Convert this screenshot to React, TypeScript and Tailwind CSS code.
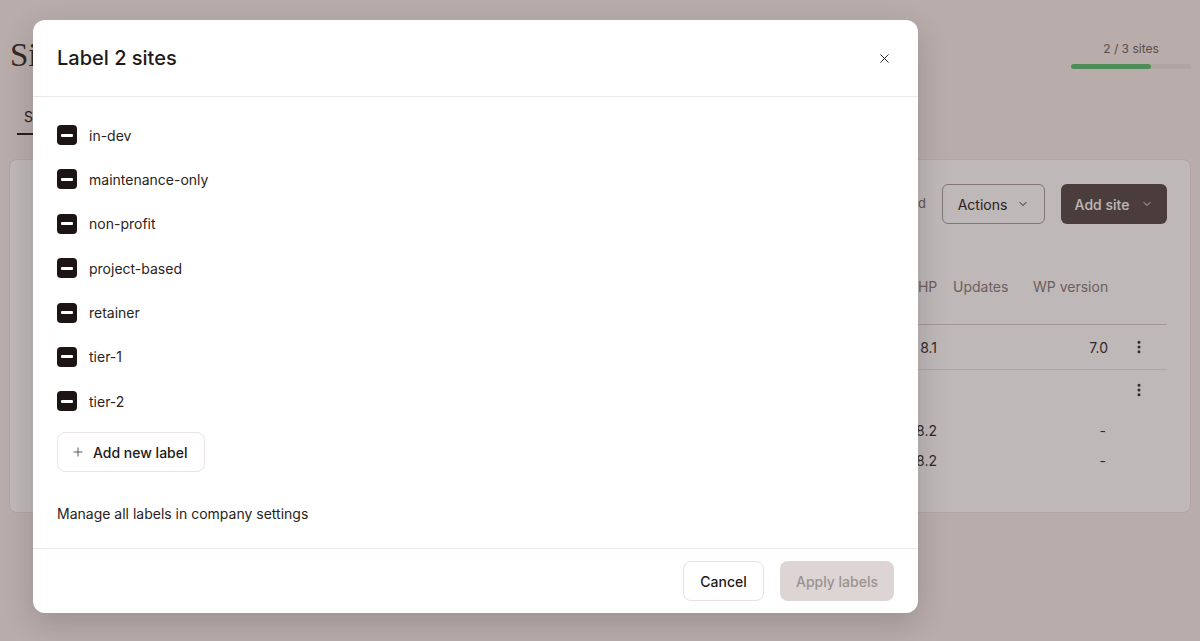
import { X, Plus, ChevronDown, EllipsisVertical } from "lucide-react"

const labels = ["in-dev", "maintenance-only", "non-profit", "project-based", "retainer", "tier-1", "tier-2"]

const cols = "grid grid-cols-[1fr_28px_96px_75px_59px]"

function MixedCheckbox() {
	return (
		<span className="flex h-5 w-5 shrink-0 items-center justify-center rounded-[4px] bg-[#1c1514]">
			<span className="h-[3px] w-[12px] rounded-[1px] bg-white" />
		</span>
	)
}

function Kebab() {
	return (
		<span className="flex justify-center pl-[2px]">
			<EllipsisVertical size={16} strokeWidth={2.5} />
		</span>
	)
}

function SitesPage() {
	return (
		<div className="min-h-[641px] bg-[#f8efed] px-[9px] text-[#2a2321]">
			<div className="flex items-start justify-between pt-[32px]">
				<h1 className="pl-px font-['Liberation_Serif',serif] text-[33px] leading-[46px] text-[#3a3230]">Sites</h1>
				<div className="flex w-[120px] flex-col items-center gap-[7px] pt-[9px]">
					<span className="text-[12px] leading-4 text-[#6f6664]">2 / 3 sites</span>
					<div className="h-[5px] w-full rounded-full bg-[#ece4e2]">
						<div className="h-full w-2/3 rounded-full bg-[#5fc274]" />
					</div>
				</div>
			</div>
			<div className="mt-[29px] flex gap-6 pl-2">
				<span className="border-b-2 border-[#2a2321] px-[7px] pb-[6px] text-[14px] leading-5">Sites</span>
				<span className="pb-[6px] text-[14px] leading-5 text-[#8a807e]">Labels</span>
			</div>
			<div className="mt-[24px] h-[354px] rounded-lg border border-[#ece3e1] bg-white pl-6 pr-[23px] pt-6">
				<div className="flex h-10 items-center justify-end gap-4">
					<span className="text-[13px] text-[#7a706e]">2 selected</span>
					<button className="flex h-10 w-[103px] items-center justify-center gap-[10px] rounded-md border border-[#a99f9d] text-[14px] text-[#2f2725]">
						Actions <ChevronDown size={12} />
					</button>
					<button className="flex h-10 w-[106px] items-center justify-center gap-3 rounded-md bg-[#5a4f4d] text-[14px] font-medium text-white">
						Add site <ChevronDown size={12} />
					</button>
				</div>
				<div className={`${cols} mt-[53px] border-b border-[#d8cecc] pb-[27px] text-[14px] leading-5 text-[#8a7f7d]`}>
					<span />
					<span className="text-right">PHP</span>
					<span className="pl-4">Updates</span>
					<span className="whitespace-nowrap text-right">WP version</span>
					<span />
				</div>
				<div className={`${cols} h-[45px] items-center border-b border-[#ece3e1] text-[14px] text-[#3a3230]`}>
					<span />
					<span className="text-right">8.1</span>
					<span />
					<span className="text-right">7.0</span>
					<Kebab />
				</div>
				<div className={`${cols} h-[40px] items-center text-[14px] text-[#3a3230]`}>
					<span />
					<span />
					<span />
					<span />
					<Kebab />
				</div>
				<div className="pt-[5px]">
					{["a", "b"].map((k) => (
						<div key={k} className={`${cols} h-[30px] items-center text-[14px] text-[#3a3230]`}>
							<span />
							<span className="text-right">8.2</span>
							<span />
							<span className="pr-[2px] text-right">-</span>
							<span />
						</div>
					))}
				</div>
			</div>
		</div>
	)
}

export default function App() {
	return (
		<div className="relative h-[641px] w-[1200px] overflow-hidden font-['Inter','Liberation_Sans',sans-serif]">
			<SitesPage />
			<div className="absolute inset-0 bg-[#281414]/30" />
			<div className="absolute left-[33px] top-[20px] flex w-[885px] flex-col rounded-xl bg-white text-[#221b1a] shadow-[0_10px_30px_rgba(30,15,15,0.18)]">
				<div className="flex h-[77px] items-center justify-between border-b border-[#ece6e4] pl-6 pr-[26px]">
					<h2 className="text-[20px] font-medium leading-7 text-[#1f1918]">Label 2 sites</h2>
					<button className="flex h-4 w-4 items-center justify-center text-[#2a2321]">
						<X size={15} strokeWidth={1.6} />
					</button>
				</div>
				<div className="px-6 pb-6 pt-[26px]">
					<div className="flex flex-col gap-[20.4px]">
						{labels.map((l) => (
							<label key={l} className="flex h-6 items-center gap-3 text-[14px] text-[#2a2321]">
								<MixedCheckbox />
								{l}
							</label>
						))}
					</div>
					<button className="mt-[19px] flex h-[40px] items-center gap-2 rounded-lg border border-[#ebe5e3] pl-[13px] pr-4 text-[14px] font-[450] text-[#221b1a]">
						<Plus size={14} strokeWidth={1.5} className="text-[#4a4240]" />
						Add new label
					</button>
					<p className="mt-[32px] text-[14px] leading-5 text-[#2a2321]">Manage all labels in company settings</p>
				</div>
				<div className="flex h-[65px] items-center justify-end gap-4 border-t border-[#ece6e4] px-6">
					<button className="h-10 w-[81px] rounded-lg border border-[#e8e1df] text-[14px] font-[450] text-[#221b1a]">
						Cancel
					</button>
					<button className="h-10 w-[114px] rounded-lg bg-[#dcd5d4] text-[14px] font-[450] text-[#9b9290]">
						Apply labels
					</button>
				</div>
			</div>
		</div>
	)
}
